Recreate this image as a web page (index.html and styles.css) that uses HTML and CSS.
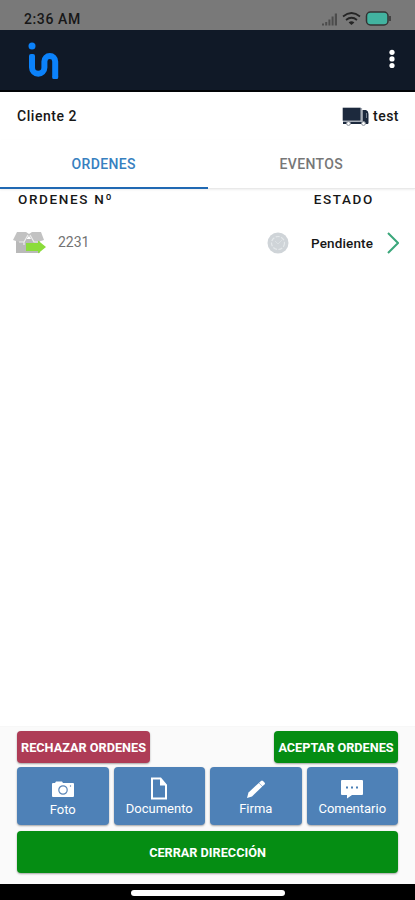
FILE: index.html
```html
<!DOCTYPE html>
<html lang="es">
<head>
    <meta charset="UTF-8">
    <meta name="viewport" content="width=device-width, initial-scale=1.0">
    <title>Ordenes</title>
    <link rel="stylesheet" href="styles.css">
</head>
<body>
    <div class="status-bar">
        <span class="time">2:36 AM</span>
        <svg class="status-icons" width="72" height="16" viewBox="0 0 72 16">
            <g fill="#4c4c4c">
                <rect x="1" y="12.500" width="2" height="2"/>
                <rect x="4.200" y="11" width="2" height="3.500"/>
                <rect x="7.400" y="8.500" width="2" height="6"/>
                <rect x="10.600" y="5.500" width="2" height="9"/>
                <rect x="13.800" y="2.500" width="2.200" height="12"/>
            </g>
            <g fill="none" stroke="#252525" stroke-width="1.700">
                <path d="M22 5.500 Q30.500 -1.500 39 5.500"/>
                <path d="M25 9 Q30.500 4.500 36 9"/>
            </g>
            <path d="M27.600 11.500 Q30.500 9 33.400 11.500 L30.500 14z" fill="#252525"/>
            <rect x="45.500" y="1" width="21.500" height="13" rx="4" fill="#42b3a0" stroke="#333" stroke-width="1.500"/>
            <path d="M69 5v5" stroke="#333" stroke-width="1.500"/>
        </svg>
    </div>

    <header class="app-bar">
        <svg class="logo" width="32" height="38" viewBox="0 0 32 38">
            <circle cx="4" cy="4" r="3.500" fill="#0b82fb"/>
            <path d="M4 14V25.500A6.200 6.200 0 0 0 16.400 25.500V19.500A5.400 5.400 0 0 1 27.200 19.500V34.500" fill="none" stroke="#0b82fb" stroke-width="6"/>
            <path d="M1 15v-1q0-2 2-2h2q2 0 2 2v1zM24.200 34h6v1.500q0 1.500-1.500 1.500h-3q-1.500 0-1.500-1.500z" fill="#0b82fb"/>
        </svg>
        <svg class="menu" width="8" height="20" viewBox="0 0 8 20" fill="#fff">
            <circle cx="4" cy="3.300" r="2.600"/>
            <circle cx="4" cy="9.900" r="2.600"/>
            <circle cx="4" cy="16.500" r="2.600"/>
        </svg>
    </header>

    <div class="client">
        <span class="client-name">Cliente 2</span>
        <div class="vehicle">
            <svg width="27" height="19" viewBox="0 0 27 19">
                <rect x=".7" y=".7" width="18" height="13" fill="#1c293d"/>
                <path d="M20.500 3H24q2.500 1 2.500 4v9.500h-6z" fill="#1c293d"/>
                <path d="M19.500 1v13.500H1" fill="none" stroke="#a8afb9" stroke-width="1.200"/>
                <path d="M24.500 6v5" stroke="#77818f"/>
                <path d="M1 16h25" stroke="#1c293d" stroke-width="2"/>
                <circle cx="6.500" cy="16.500" r="1.900" fill="#fff" stroke="#8b929c"/>
                <circle cx="21.500" cy="16.500" r="1.900" fill="#fff" stroke="#8b929c"/>
            </svg>
            <span class="vehicle-name">test</span>
        </div>
    </div>

    <nav class="tabs">
        <div class="tab active"><span>ORDENES</span></div>
        <div class="tab"><span>EVENTOS</span></div>
    </nav>

    <main>
        <div class="list-head">
            <span class="head-order">ORDENES Nº</span>
            <span class="head-state">ESTADO</span>
        </div>
        <div class="order">
            <svg class="box" width="34" height="24" viewBox="0 0 34 24">
                <path d="M4 8h24v14H4z" fill="#b9b9b9"/>
                <path d="M5 1h9l3 2 3-2h9l3 8-6 2h-5l-4-6-5 6H7L1 9z" fill="#c2c2c2"/>
                <path d="M7 11h5l4-7M18 4l4 7h4M12 11v3" fill="none" stroke="#ededed" stroke-width="1.200"/>
                <path d="M14 12h12V9.500l8 6.500-8 6.500V20H14z" fill="#8bdc3b"/>
            </svg>
            <span class="number">2231</span>
            <svg class="state-icon" width="22" height="22" viewBox="0 0 22 22" fill="none">
                <circle cx="11" cy="11" r="10.500" fill="#cfd4d8"/>
                <circle cx="11" cy="11" r="6.500" stroke="#e4e8ea" stroke-width="1.200" stroke-dasharray="4 1.500"/>
                <path d="M8 9l3 3 4-4" stroke="#dbe0e3"/>
            </svg>
            <span class="state">Pendiente</span>
            <svg class="arrow" width="12" height="22" viewBox="0 0 12 22">
                <path d="M1 1l10 10L1 21" fill="none" stroke="#3ba77b" stroke-width="2"/>
            </svg>
        </div>
    </main>

    <footer class="actions">
        <div class="decision">
            <button class="btn reject"><span>RECHAZAR ORDENES</span></button>
            <button class="btn accept"><span>ACEPTAR ORDENES</span></button>
        </div>
        <div class="tools">
            <button class="btn tool photo">
                <svg width="24" height="20" viewBox="0 0 24 20">
                    <path d="M1 3q0-1 1-1h2l1-1.500h6L12 2h10q1 0 1 1v12q0 1-1 1H2q-1 0-1-1z" fill="#fff"/>
                    <circle cx="12" cy="9" r="4.200" fill="none" stroke="#5a86b8" stroke-width="1.200"/>
                    <circle cx="19.500" cy="5" r=".7" fill="#5a86b8"/>
                </svg>
                <span>Foto</span>
            </button>
            <button class="btn tool">
                <svg width="18" height="23" viewBox="0 0 18 23">
                    <path d="M2 1.500h8.500L16 8v13.500H2z" fill="none" stroke="#fff" stroke-width="2"/>
                    <path d="M10 1v7.500h7z" fill="#fff"/>
                </svg>
                <span>Documento</span>
            </button>
            <button class="btn tool">
                <svg width="20" height="20" viewBox="0 0 20 20" fill="#fff">
                    <path d="M1 18l1.500-5.500L12.800 2.900l3.500 3.500L6 16.500z"/>
                    <path d="M13 2.700L15 .9q1-1 2 0l1.500 1.500q1 1 0 2l-2 1.800z"/>
                </svg>
                <span>Firma</span>
            </button>
            <button class="btn tool">
                <svg width="24" height="21" viewBox="0 0 24 21">
                    <path d="M1 2q0-1 1-1h20q1 0 1 1v13q0 1-1 1H12l-5 3.500V16H2q-1 0-1-1z" fill="#fff"/>
                    <path d="M6 8.500h2M11 8.500h2M16 8.500h2" stroke="#4b7fb5" stroke-width="2"/>
                </svg>
                <span>Comentario</span>
            </button>
        </div>
        <button class="btn close"><span>CERRAR DIRECCIÓN</span></button>
    </footer>
    <div class="nav-bar"><div class="handle"></div></div>
</body>
</html>
```
FILE: styles.css
```css
* {
    box-sizing: border-box;
}
body {
    margin: 0;
    height: 900px;
    display: flex;
    flex-direction: column;
    overflow: hidden;
    background: #fff;
    color: #171717;
    font-family: Roboto, sans-serif;
    font-size: 14px;
}
svg {
    display: block;
    flex-shrink: 0;
}
.status-bar {
    height: 30px;
    background: #797979;
    display: flex;
    justify-content: space-between;
    padding: 11px 22px 0 24px;
}
.time {
    font-size: 14px;
    font-weight: 500;
    line-height: 17px;
    letter-spacing: .6px;
}
.app-bar {
    height: 62px;
    background: #101927;
    border-bottom: 2px solid #020407;
    display: flex;
    justify-content: space-between;
    padding: 12px 19px 0 28px;
}
.menu {
    margin-top: 7px;
}
.client {
    height: 48px;
    display: flex;
    justify-content: space-between;
    align-items: center;
    padding: 0 16px 0 17px;
    font-weight: 500;
}
.client-name {
    letter-spacing: .55px;
}
.vehicle {
    display: flex;
    align-items: center;
    gap: 4px;
}
.vehicle-name {
    letter-spacing: .5px;
}
.tabs {
    height: 49px;
    display: flex;
    border-bottom: 1px solid #e9e9e9;
    box-shadow: 0 1px 2px #eee;
}
.tab {
    width: 50%;
    height: 49px;
    text-align: center;
    font-weight: 500;
    line-height: 48px;
    letter-spacing: .35px;
    color: #777;
    border-bottom: 2px solid transparent;
}
.tab.active {
    color: #3780c0;
    border-color: #2069b3;
}
main {
    flex: 1;
}
.list-head {
    height: 21px;
    display: flex;
    justify-content: space-between;
    padding: 0 41px 0 18px;
    font-size: 13.5px;
    font-weight: 500;
    line-height: 21px;
    letter-spacing: 1.65px;
}
.order {
    height: 66px;
    display: flex;
    align-items: center;
    padding: 0 16px 0 12px;
}
.number {
    margin: -2px 0 0 12px;
    color: #737373;
    line-height: 18px;
}
.state-icon {
    margin-left: auto;
}
.state {
    width: 63px;
    margin-left: 22px;
    font-size: 13.5px;
    font-weight: 500;
    white-space: nowrap;
    letter-spacing: .15px;
}
.arrow {
    margin-left: 13px;
}
.actions {
    height: 158px;
    background: #fafafa;
    border-top: 1px solid #f7f7f7;
    padding: 4px 17px 0;
}
.btn {
    padding: 0;
    border: 0;
    border-radius: 4px;
    color: #fff;
    font-family: inherit;
    font-size: 12.7px;
    font-weight: 700;
    white-space: nowrap;
    box-shadow: 0 1px 2px rgba(0,0,0,0.35);
}
.decision {
    display: flex;
    justify-content: space-between;
}
.decision .btn {
    height: 32px;
}
.reject {
    width: 133px;
    background: #ae3c56;
}
.accept {
    width: 124px;
    background: #058d13;
}
.tools {
    display: grid;
    grid-template-columns: repeat(4, 1fr);
    gap: 5px;
    margin: 4px 0 6px;
}
.tool {
    height: 58px;
    background: #4e81b7;
    display: flex;
    flex-direction: column;
    align-items: center;
    justify-content: flex-end;
    gap: 2px;
    padding-bottom: 9px;
    font-size: 13px;
    font-weight: 400;
    line-height: 14px;
}
.photo {
    padding-bottom: 8px;
}
.close {
    display: block;
    width: 100%;
    height: 42px;
    background: #058d13;
}
.nav-bar {
    height: 16px;
    background: #000;
    display: flex;
    justify-content: center;
    padding-top: 6px;
}
.handle {
    width: 154px;
    height: 6px;
    border-radius: 3px;
    background: #fff;
}
```
